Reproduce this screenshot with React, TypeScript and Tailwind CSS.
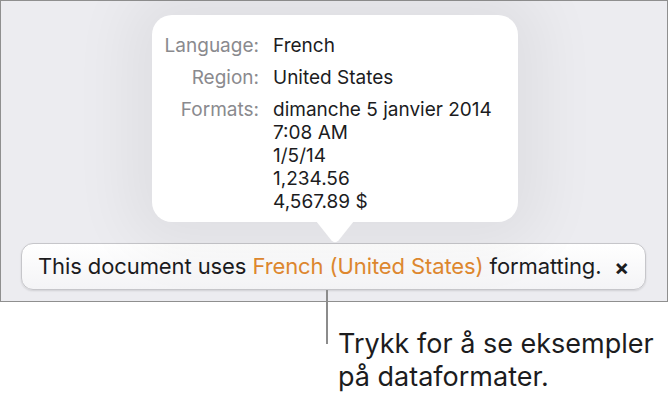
import React from "react";

const font = { fontFamily: "Inter, 'Noto Sans', sans-serif" };

function Row({ label, children }: { label: string; children: React.ReactNode }) {
  return (
    <div className="flex">
      <div className="w-[107px] shrink-0 text-right text-[#8a8a8e]">{label}</div>
      <div className="pl-[14px] text-[#1c1c1e]">{children}</div>
    </div>
  );
}

export default function App() {
  return (
    <div className="relative w-[668px] h-[404px] bg-white overflow-hidden" style={font}>
      <div className="w-[668px] h-[302px] border border-[#8f8f8f] bg-[#ececf0] flex flex-col">
        <div className="relative ml-[151px] mt-[14px] w-[366px] h-[207px] rounded-[20px] bg-white shadow-[0_0_60px_25px_rgba(0,0,0,0.055)] pt-[19px] text-[19px] leading-[23px]">
          <div className="flex flex-col gap-[9px]">
            <Row label="Language:">French</Row>
            <Row label="Region:">United States</Row>
            <Row label="Formats:">
              <div>dimanche 5 janvier 2014</div>
              <div>7:08 AM</div>
              <div>1/5/14</div>
              <div>1,234.56</div>
              <div>4,567.89 $</div>
            </Row>
          </div>
          <svg
            className="absolute left-[164px] top-[206px]"
            width="38"
            height="22"
            viewBox="0 0 38 22"
          >
            <path d="M0 0 L15.5 19.5 Q19 23 22.5 19.5 L38 0 Z" fill="#ffffff" />
          </svg>
        </div>
        <div className="mt-[21px] ml-[20px] w-[625px] h-[47px] rounded-[12px] border border-[#c6c6ca] bg-gradient-to-b from-[#ffffff] to-[#f4f4f6] shadow-[0_1px_2px_rgba(0,0,0,0.12)] flex items-center pl-[16px] pr-[16px] text-[22px] tracking-[-0.1px] text-[#1c1c1e]">
          <span className="flex-1 whitespace-nowrap">
            This document uses <span className="text-[#e0892f]">French (United States)</span> formatting.
          </span>
          <span className="text-[22px] font-bold leading-none text-[#1c1c1e]">×</span>
        </div>
      </div>
      <div className="absolute left-[326px] top-[290px] w-[2px] h-[54px] bg-[#8c8c8c]" />
      <div className="pl-[338px] pt-[25px] text-[27px] leading-[33px] text-[#1c1c1e]">
        <div>Trykk for å se eksempler</div>
        <div>på dataformater.</div>
      </div>
    </div>
  );
}
